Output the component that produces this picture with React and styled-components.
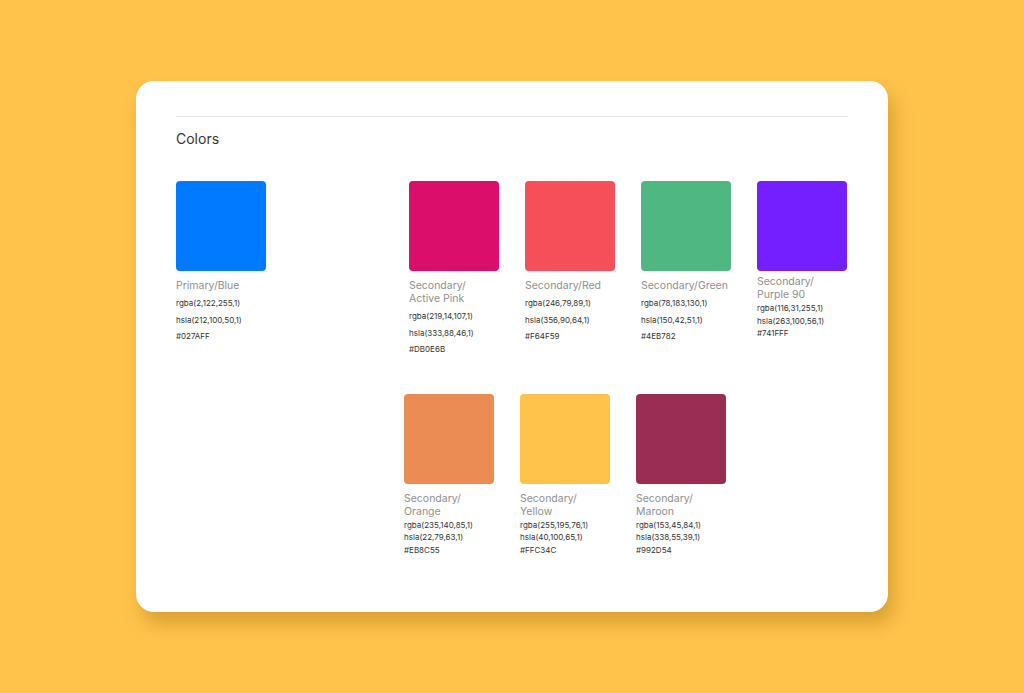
import React from 'react';
import styled, { createGlobalStyle } from 'styled-components';

const Global = createGlobalStyle`
  html, body { margin: 0; background: #ffc34c; }
  body { font-family: Inter, "Noto Sans", sans-serif; }
`;

const Page = styled.div`
  width: 1024px;
  height: 693px;
  padding-top: 81px;
  box-sizing: border-box;
  display: flex;
  justify-content: center;
  padding-right: 0;
`;

const Card = styled.div`
  width: 752px;
  height: 531px;
  margin-left: 0;
  box-sizing: border-box;
  background: #fff;
  border-radius: 18px;
  box-shadow: 6px 12px 18px rgba(150, 100, 0, 0.35);
  padding: 35px 40px 0;
`;

const Rule = styled.div`
  border-top: 1px solid #e2e2e2;
`;

const Title = styled.h2`
  margin: 13px 0 0;
  font-size: 14px;
  font-weight: 400;
  color: #333;
  line-height: 17px;
`;

const Row = styled.div`
  display: flex;
  margin-top: ${(p) => p.top}px;
  margin-left: ${(p) => p.left || 0}px;
`;

const Item = styled.div`
  width: 90px;
  margin-left: ${(p) => p.gap}px;
`;

const Box = styled.div`
  width: 90px;
  height: 90px;
  border-radius: 4px;
  background: ${(p) => p.color};
`;

const Name = styled.div`
  margin-top: ${(p) => p.top}px;
  font-size: 10.5px;
  line-height: 13px;
  color: #8f8f8f;
`;

const Value = styled.div`
  font-size: 8px;
  color: #333;
  line-height: ${(p) => p.lh}px;
  margin-top: ${(p) => p.first}px;
`;

const Swatch = ({ color, name, rgba, hsla, hex, gap, dense, nameTop = 8 }) => {
  const lh = dense ? 12.5 : 16.5;
  return (
    <Item gap={gap}>
      <Box color={color} />
      <Name top={nameTop}>{name.map((n) => <div key={n}>{n}</div>)}</Name>
      <Value lh={lh} first={dense ? 1 : 3}>{rgba}</Value>
      <Value lh={lh} first={0}>{hsla}</Value>
      <Value lh={lh} first={0}>{hex}</Value>
    </Item>
  );
};

export default function App() {
  return (
    <Page>
      <Global />
      <Card>
        <Rule />
        <Title>Colors</Title>
        <Row top={34}>
          <Swatch gap={0} color="#027aff" name={['Primary/Blue']} rgba="rgba(2,122,255,1)" hsla="hsla(212,100,50,1)" hex="#027AFF" />
          <Swatch gap={143} color="#db0e6b" name={['Secondary/', 'Active Pink']} rgba="rgba(219,14,107,1)" hsla="hsla(333,88,46,1)" hex="#DB0E6B" />
          <Swatch gap={26} color="#f64f59" name={['Secondary/Red']} rgba="rgba(246,79,89,1)" hsla="hsla(356,90,64,1)" hex="#F64F59" />
          <Swatch gap={26} color="#4eb782" name={['Secondary/Green']} rgba="rgba(78,183,130,1)" hsla="hsla(150,42,51,1)" hex="#4EB782" />
          <Swatch gap={26} dense nameTop={4} color="#741fff" name={['Secondary/', 'Purple 90']} rgba="rgba(116,31,255,1)" hsla="hsla(263,100,56,1)" hex="#741FFF" />
        </Row>
        <Row top={0} left={228} style={{ marginTop: 36 }}>
          <Swatch gap={0} dense color="#eb8c55" name={['Secondary/', 'Orange']} rgba="rgba(235,140,85,1)" hsla="hsla(22,79,63,1)" hex="#EB8C55" />
          <Swatch gap={26} dense color="#ffc34c" name={['Secondary/', 'Yellow']} rgba="rgba(255,195,76,1)" hsla="hsla(40,100,65,1)" hex="#FFC34C" />
          <Swatch gap={26} dense color="#992d54" name={['Secondary/', 'Maroon']} rgba="rgba(153,45,84,1)" hsla="hsla(338,55,39,1)" hex="#992D54" />
        </Row>
      </Card>
    </Page>
  );
}
